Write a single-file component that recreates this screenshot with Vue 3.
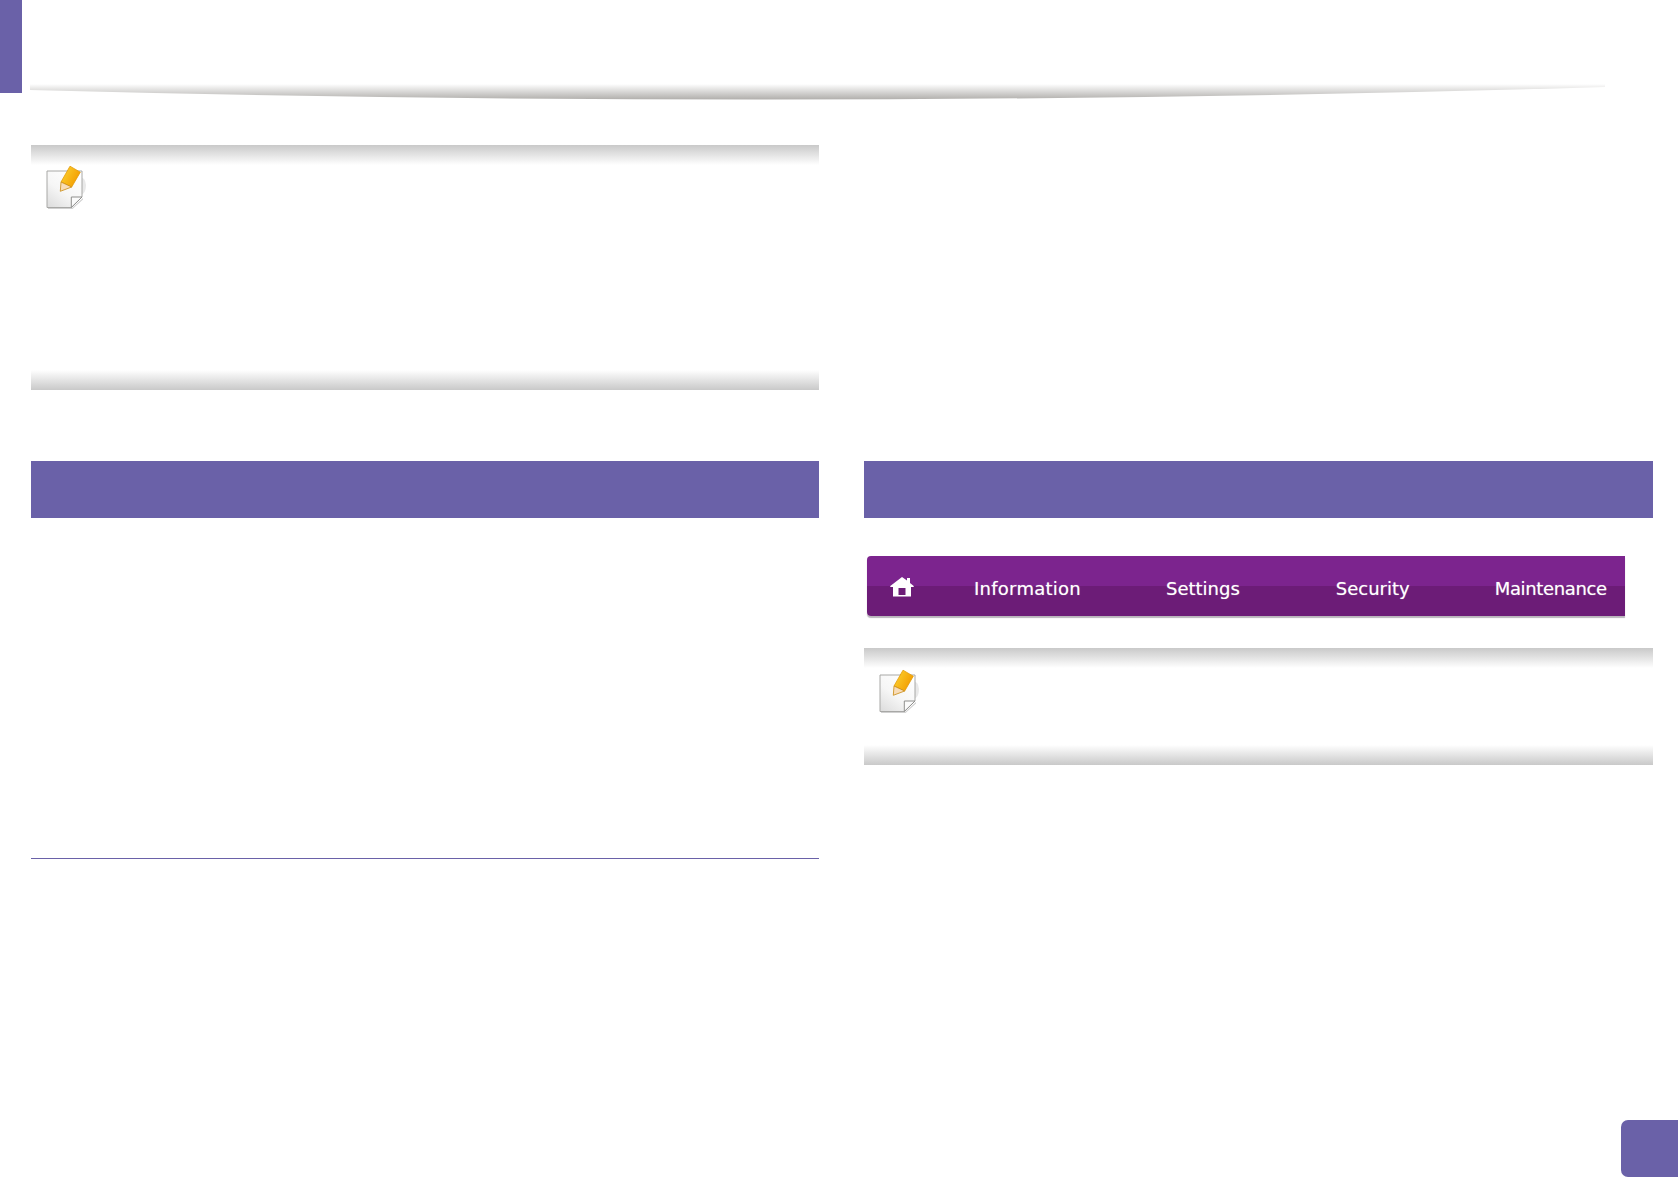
<script setup>
const navItems = [
  { label: 'Information', cls: 'info' },
  { label: 'Settings', cls: 'settings' },
  { label: 'Security', cls: 'security' },
  { label: 'Maintenance', cls: 'maint' },
]
</script>

<template>
  <div class="page">
    <header class="top">
      <div class="tab"></div>
      <svg class="swoosh" viewBox="0 0 1600 20" aria-hidden="true">
        <defs>
          <linearGradient id="sw" gradientUnits="userSpaceOnUse" x1="0" x2="0" y1="1" y2="17">
            <stop offset="0" stop-color="#ffffff" />
            <stop offset="1" stop-color="#aeaca9" />
          </linearGradient>
        </defs>
        <path d="M0 7 Q780 27.5 1575 4 V0 H0 Z" fill="url(#sw)" />
      </svg>
    </header>

    <div class="columns">
      <div class="col">
        <section class="note note-large">
          <svg class="note-icon" viewBox="0 0 42 48" aria-hidden="true">
            <defs>
              <linearGradient id="paper" x1="0.8" y1="0" x2="0.1" y2="1">
                <stop offset="0" stop-color="#ffffff" />
                <stop offset="0.55" stop-color="#f6f6f6" />
                <stop offset="1" stop-color="#dedede" />
              </linearGradient>
              <linearGradient id="pencil" x1="0" y1="0" x2="1" y2="0.55">
                <stop offset="0" stop-color="#fdd835" />
                <stop offset="1" stop-color="#f39c00" />
              </linearGradient>
            </defs>
            <path d="M30 12 Q41 14 41 22 Q41 30 36 32 Z" fill="#e9e9e9" />
            <path d="M3 45 H27 L38 35 V36.5 L27.5 46 H3 Z" fill="#d0d0d0" />
            <path d="M2 8 H37 V34 L26.3 44.5 H2 Z" fill="url(#paper)" stroke="#a8a8a6" stroke-width="1" />
            <path d="M37 34 L26.3 44.5 V34 Z" fill="#fbfbfb" stroke="#8f8f8d" stroke-width="1" />
            <path d="M25 3.2 L35.3 9.2 L26.7 24 L16 19 Z" fill="url(#pencil)" stroke="#e39a08" stroke-width="0.8" />
            <path d="M16 19 L26.7 24 L15.3 28.3 Z" fill="#f8dcb8" stroke="#c98a10" stroke-width="0.8" />
          </svg>
        </section>
        <div class="bar"></div>
        <div class="body"></div>
        <div class="rule"></div>
      </div>

      <div class="col">
        <div class="note-spacer"></div>
        <div class="bar"></div>
        <nav class="nav">
          <svg class="home" viewBox="0 0 24 20" aria-hidden="true">
            <path fill-rule="evenodd" d="M12 0 L17 3.6 V1 H20 V6 L23.7 9 V10 H21 V19.5 H3 V10 H0.3 V9 Z M8.5 11 V18 H15.5 V11 Z" fill="#fff" />
          </svg>
          <span v-for="item in navItems" :key="item.label" class="nav-item" :class="item.cls">{{ item.label }}</span>
        </nav>
        <section class="note note-small">
          <svg class="note-icon" viewBox="0 0 42 48" aria-hidden="true">
            <path d="M30 12 Q41 14 41 22 Q41 30 36 32 Z" fill="#e9e9e9" />
            <path d="M3 45 H27 L38 35 V36.5 L27.5 46 H3 Z" fill="#d0d0d0" />
            <path d="M2 8 H37 V34 L26.3 44.5 H2 Z" fill="url(#paper)" stroke="#a8a8a6" stroke-width="1" />
            <path d="M37 34 L26.3 44.5 V34 Z" fill="#fbfbfb" stroke="#8f8f8d" stroke-width="1" />
            <path d="M25 3.2 L35.3 9.2 L26.7 24 L16 19 Z" fill="url(#pencil)" stroke="#e39a08" stroke-width="0.8" />
            <path d="M16 19 L26.7 24 L15.3 28.3 Z" fill="#f8dcb8" stroke="#c98a10" stroke-width="0.8" />
          </svg>
        </section>
      </div>
    </div>

    <div class="badge"></div>
  </div>
</template>

<style scoped>
.page {
  position: relative;
  width: 1678px;
  height: 1178px;
  overflow: hidden;
  background: #fff;
  font-family: "DejaVu Sans", sans-serif;
}
.top {
  height: 145px;
  display: flex;
  align-items: flex-start;
}
.tab {
  width: 22px;
  height: 93px;
  background: #6a61a8;
  flex: none;
}
.swoosh {
  width: 1600px;
  height: 20px;
  margin: 83px 0 0 8px;
  flex: none;
}
.columns {
  display: grid;
  grid-template-columns: 788px 789px;
  column-gap: 45px;
  padding-left: 31px;
}
.col {
  display: flex;
  flex-direction: column;
}
.note {
  box-sizing: border-box;
  padding: 18px 0 0 14px;
  background:
    linear-gradient(#c9c9c9, #fff) top / 100% 20px no-repeat,
    linear-gradient(#fff, #c9c9c9) bottom / 100% 20px no-repeat,
    #fff;
}
.note-large {
  height: 245px;
  margin-bottom: 71px;
}
.note-small {
  height: 117px;
  padding-top: 19px;
}
.note-spacer {
  height: 316px;
}
.note-icon {
  display: block;
  width: 42px;
  height: 48px;
}
.bar {
  height: 57px;
  background: #6a61a8;
}
.body {
  height: 340px;
}
.rule {
  height: 1px;
  background: #6a61a8;
}
.nav {
  box-sizing: border-box;
  width: 758px;
  height: 60px;
  margin: 38px 0 32px 3px;
  padding: 5px 0 0 23px;
  display: flex;
  align-items: center;
  border-radius: 4px 0 0 4px;
  background: linear-gradient(#7c248e 0 50%, #6c1c77 50% 100%);
  box-shadow: 0 2px 1px #b9b5bb;
  color: #fff;
}
.home {
  width: 24px;
  height: 20px;
  margin-top: -3px;
  flex: none;
}
.nav-item {
  font-size: 18px;
  line-height: 24px;
  white-space: nowrap;
  text-shadow: 0 0 1px rgba(255, 255, 255, 0.55);
}
.info {
  margin-left: 60px;
  letter-spacing: 0.25px;
}
.settings {
  margin-left: 85px;
}
.security {
  margin-left: 96px;
}
.maint {
  margin-left: 85px;
  letter-spacing: -0.35px;
}
.badge {
  position: absolute;
  left: 1621px;
  top: 1120px;
  width: 57px;
  height: 57px;
  border-radius: 7px 0 0 7px;
  background: #6a61a8;
}
</style>
